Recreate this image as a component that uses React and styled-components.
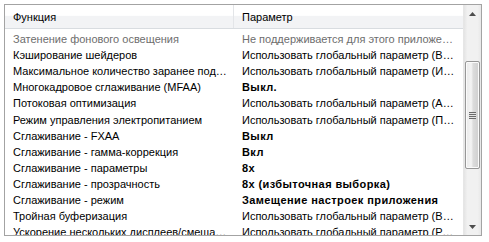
import React from "react";
import styled, { createGlobalStyle } from "styled-components";

const GlobalStyle = createGlobalStyle`
  body {
    margin: 0;
    background: #ffffff;
    font-family: "Liberation Sans", Arial, sans-serif;
  }
`;

const Frame = styled.div`
  margin: 4px 0 0 4px;
  width: 476px;
  height: 230px;
  border: 1px solid #a3a3a3;
  display: flex;
  overflow: hidden;
  background: #fff;
`;

const Table = styled.div`
  flex: 1;
  min-width: 0;
  display: flex;
  flex-direction: column;
`;

const HeaderRow = styled.div`
  display: grid;
  grid-template-columns: 229px 1fr;
  height: 23px;
  background: linear-gradient(#ffffff, #ffffff 45%, #f2f3f5 50%, #f2f3f5);
  border-bottom: 1px solid #d8dce0;
`;

const HeaderCell = styled.div`
  display: flex;
  align-items: center;
  padding-left: 8px;
  font-size: 11px;
  color: #000;
  border-right: ${(p) => (p.$divider ? "1px solid #e3e5e8" : "none")};
`;

const Body = styled.div`
  flex: 1;
  overflow: hidden;
  padding-top: 2px;
`;

const Row = styled.div`
  display: grid;
  grid-template-columns: 229px 1fr;
  height: 16.1px;
  align-items: center;
`;

const Cell = styled.div`
  padding-left: 8px;
  padding-right: 6px;
  font-size: 11px;
  white-space: nowrap;
  overflow: hidden;
  text-overflow: ellipsis;
  color: ${(p) => (p.$muted ? "#6d6d6d" : "#000")};
  font-weight: ${(p) => (p.$bold ? 700 : 400)};
  letter-spacing: ${(p) => (p.$bold ? "0.4px" : "0")};
`;

const Scrollbar = styled.div`
  width: 17px;
  display: flex;
  flex-direction: column;
  background: linear-gradient(90deg, #e4e4e4, #f1f1f1 20%, #f1f1f1 80%, #e8e8e8);
  border-left: 1px solid #e6e6e6;
`;

const Arrow = styled.div`
  height: 17px;
  display: flex;
  align-items: center;
  justify-content: center;
`;

const Track = styled.div`
  flex: 1;
  display: flex;
  flex-direction: column;
  padding-top: 39px;
`;

const Thumb = styled.div`
  margin: 0 1px;
  height: 106px;
  border: 1px solid #979797;
  border-radius: 2px;
  background: linear-gradient(90deg, #e9e9e9, #f4f4f4 40%, #dcdcdc 55%, #cfcfcf);
  display: flex;
  align-items: center;
  justify-content: center;
  box-shadow: inset 0 0 0 1px #fbfbfb;
`;

const Grip = styled.div`
  width: 7px;
  height: 7px;
  background: repeating-linear-gradient(#6a6a6a 0 1px, #e4e4e4 1px 2px);
`;

const rows = [
  ["Затенение фонового освещения", "Не поддерживается для этого приложения", false, true],
  ["Кэширование шейдеров", "Использовать глобальный параметр (Вкл)", false],
  ["Максимальное количество заранее подготовленных кадров", "Использовать глобальный параметр (Использовать настройку 3D-приложения)", false],
  ["Многокадровое сглаживание (MFAA)", "Выкл.", true],
  ["Потоковая оптимизация", "Использовать глобальный параметр (Авто)", false],
  ["Режим управления электропитанием", "Использовать глобальный параметр (Предпочтителен режим оптимальной производительности)", false],
  ["Сглаживание - FXAA", "Выкл", true],
  ["Сглаживание - гамма-коррекция", "Вкл", true],
  ["Сглаживание - параметры", "8x", true],
  ["Сглаживание - прозрачность", "8x (избыточная выборка)", true],
  ["Сглаживание - режим", "Замещение настроек приложения", true],
  ["Тройная буферизация", "Использовать глобальный параметр (Выкл)", false],
  ["Ускорение нескольких дисплеев/смешанных ГП", "Использовать глобальный параметр (Режим многодисплейной производительности)", false],
];

function ArrowIcon({ down }) {
  return (
    <svg width="7" height="4" viewBox="0 0 7 4">
      <path d={down ? "M0 0h7L3.5 4z" : "M0 4h7L3.5 0z"} fill="#4d4d4d" />
    </svg>
  );
}

export default function App() {
  return (
    <>
      <GlobalStyle />
      <Frame>
        <Table>
          <HeaderRow>
            <HeaderCell $divider>Функция</HeaderCell>
            <HeaderCell>Параметр</HeaderCell>
          </HeaderRow>
          <Body>
            {rows.map(([name, value, bold, muted]) => (
              <Row key={name}>
                <Cell $muted={muted}>{name}</Cell>
                <Cell $muted={muted} $bold={bold}>{value}</Cell>
              </Row>
            ))}
          </Body>
        </Table>
        <Scrollbar>
          <Arrow>
            <ArrowIcon />
          </Arrow>
          <Track>
            <Thumb>
              <Grip />
            </Thumb>
          </Track>
          <Arrow>
            <ArrowIcon down />
          </Arrow>
        </Scrollbar>
      </Frame>
    </>
  );
}
